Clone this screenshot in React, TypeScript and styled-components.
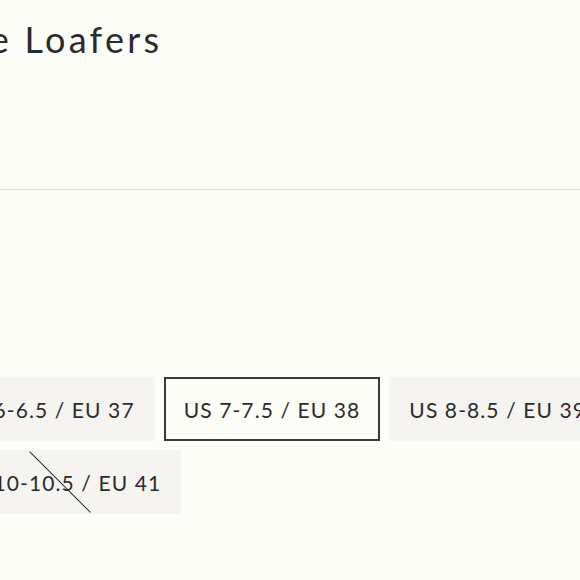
import styled, { createGlobalStyle, css } from "styled-components";

const GlobalStyle = createGlobalStyle`
    html, body {
        margin: 0;
        padding: 0;
        background: #fdfdf8;
        overflow: hidden;
    }
    body {
        font-family: Lato, "Noto Sans", sans-serif;
        color: #2b2b2f;
    }
`;

const Page = styled.div`
    width: 720px;
    margin-left: -62px;
    padding-top: 15px;
`;

const Title = styled.h1`
    margin: 0 0 0 4px;
    font-size: 36px;
    font-weight: 400;
    letter-spacing: 3.3px;
    line-height: 48px;
`;

const Divider = styled.hr`
    margin: 126px 0 0 -100px;
    border: none;
    border-top: 1px solid #ecdcdc;
    width: 900px;
`;

const SizeList = styled.div`
    display: flex;
    flex-wrap: wrap;
    gap: 9px;
    margin-top: 187px;
`;

const SizeButton = styled.button<{ $selected?: boolean; $soldOut?: boolean }>`
    position: relative;
    height: 64px;
    padding: 0 18px;
    background: #f5f4f1;
    border: 2px solid transparent;
    font-family: inherit;
    font-size: 21px;
    letter-spacing: 1.1px;
    color: #2b2b2f;
    cursor: pointer;
    ${(props) => props.$selected && css`
        background: transparent;
        border-color: #3a3a3e;
    `}
    ${(props) => props.$soldOut && css`
        &::after {
            content: "";
            position: absolute;
            left: 50%;
            top: 50%;
            width: 86px;
            height: 1px;
            background: #2b2b2f;
            transform: translate(-50%, -50%) rotate(45deg);
        }
    `}
`;

const sizes = [
    { label: "US 6-6.5 / EU 37" },
    { label: "US 7-7.5 / EU 38", selected: true },
    { label: "US 8-8.5 / EU 39" },
    { label: "US 10-10.5 / EU 41", soldOut: true },
];

function App() {
    return (
        <Page>
            <GlobalStyle />
            <Title>The Loafers</Title>
            <Divider />
            <SizeList>
                {sizes.map((size) => (
                    <SizeButton key={size.label} $selected={size.selected} $soldOut={size.soldOut}>
                        {size.label}
                    </SizeButton>
                ))}
            </SizeList>
        </Page>
    );
}

export default App;
